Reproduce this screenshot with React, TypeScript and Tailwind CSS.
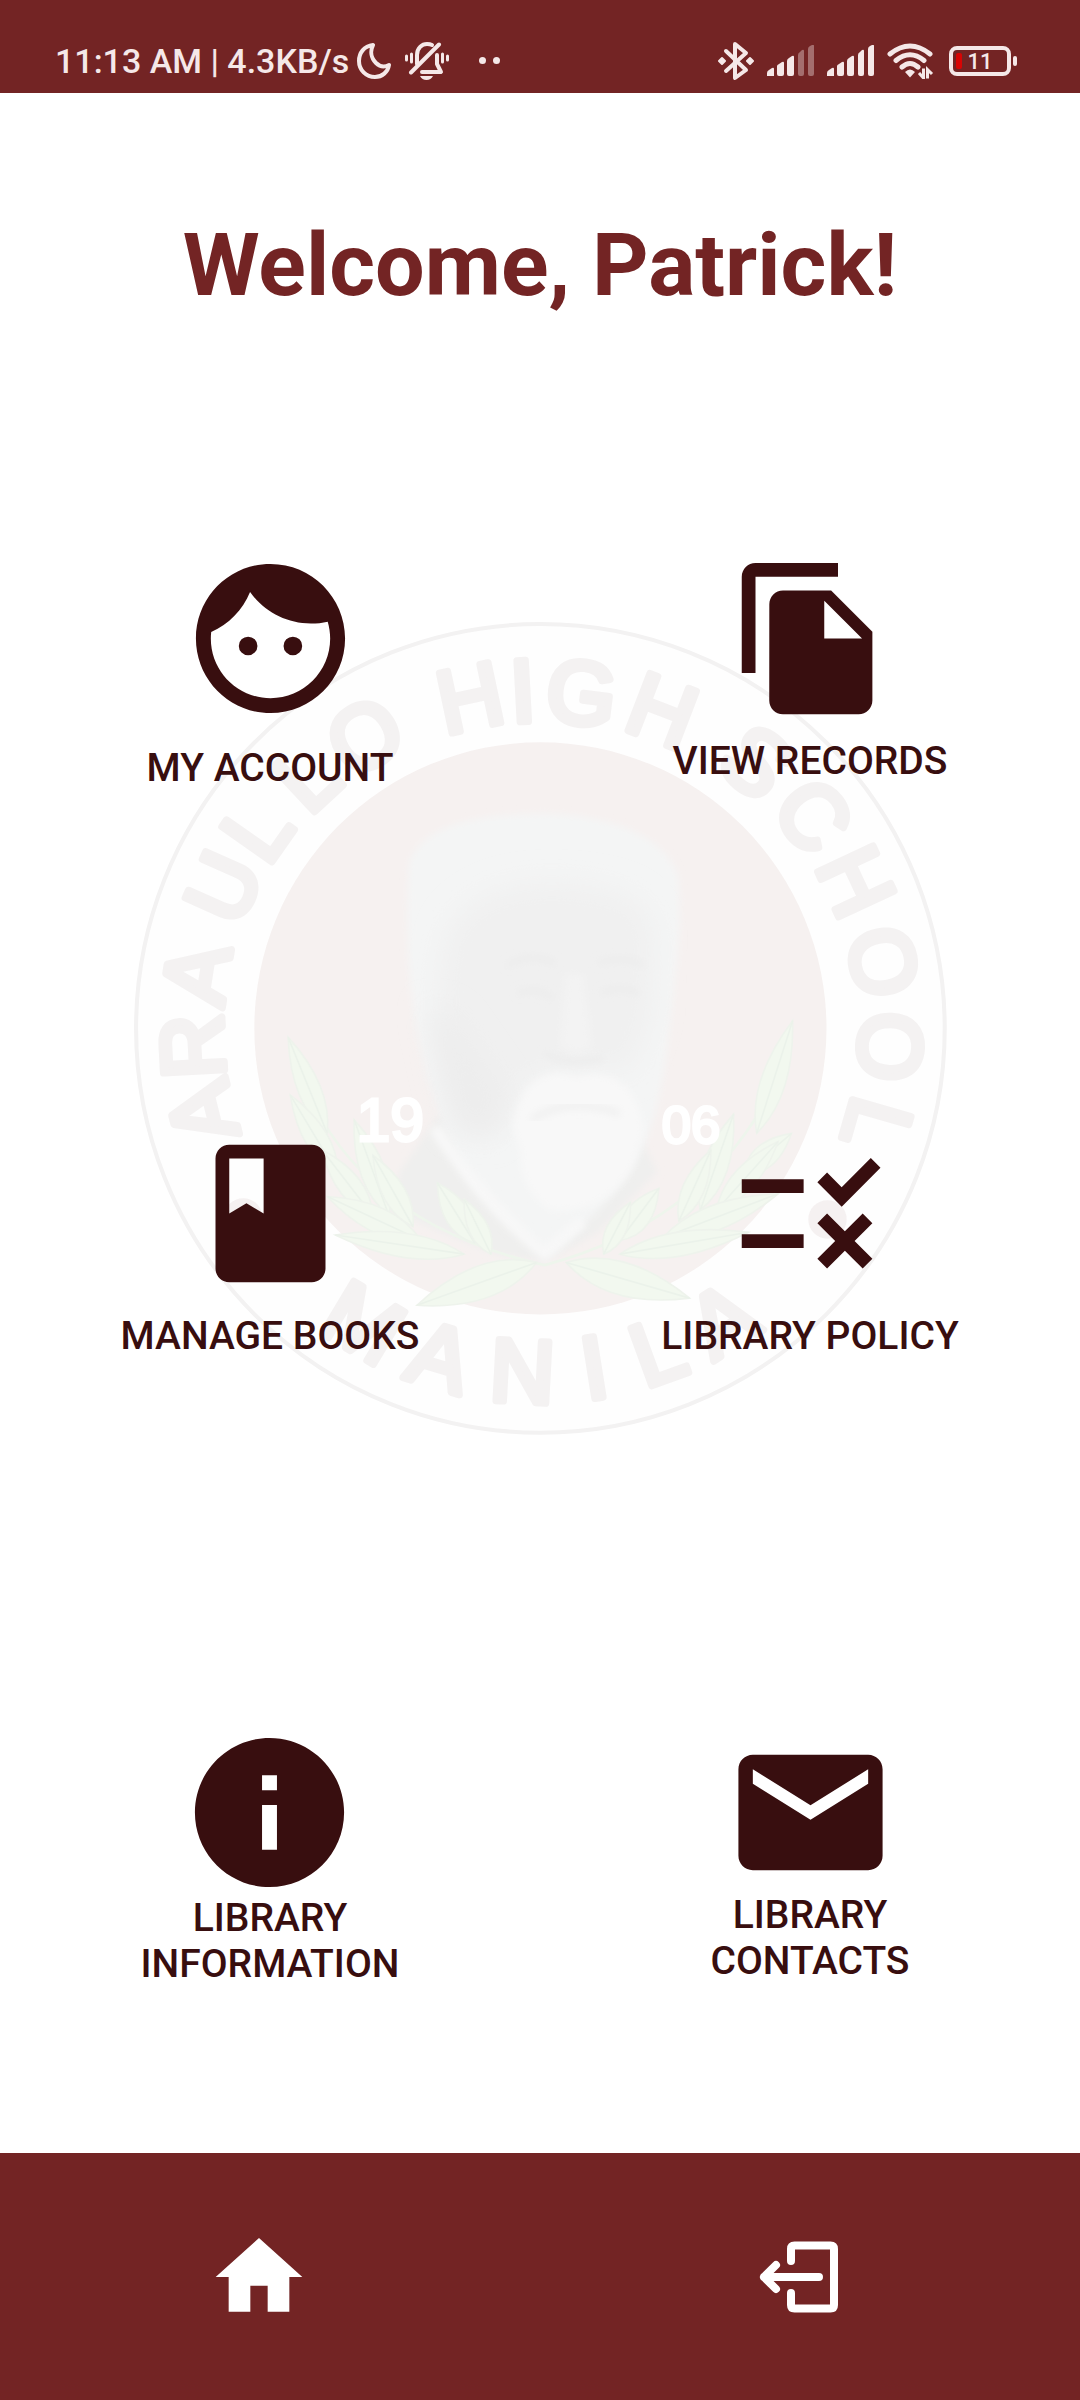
import type { ReactNode } from "react";

const GLYPHS: { ch: string; deg: number; y: number }[] = [
  { ch: "A", deg: -104, y: 92 },
  { ch: "R", deg: -93, y: 92 },
  { ch: "A", deg: -81, y: 92 },
  { ch: "U", deg: -66, y: 93 },
  { ch: "L", deg: -55, y: 94 },
  { ch: "L", deg: -43, y: 97 },
  { ch: "O", deg: -31, y: 99 },
  { ch: "H", deg: -12, y: 102 },
  { ch: "I", deg: -3, y: 102 },
  { ch: "G", deg: 7, y: 102 },
  { ch: "H", deg: 21, y: 100 },
  { ch: "S", deg: 39, y: 97 },
  { ch: "C", deg: 52, y: 94 },
  { ch: "H", deg: 65, y: 92 },
  { ch: "O", deg: 79, y: 91 },
  { ch: "O", deg: 93, y: 90 },
  { ch: "L", deg: 106, y: 90 },
];

const CITY: { ch: string; deg: number }[] = [
  { ch: "M", deg: 31 },
  { ch: "A", deg: 17 },
  { ch: "N", deg: 3 },
  { ch: "I", deg: -9 },
  { ch: "L", deg: -20 },
  { ch: "A", deg: -32 },
];

// Leaf as base point, tip point and half width.
const LEAVES: [number, number, number, number, number][] = [
  [385, 970, 312, 795, 42],
  [405, 1045, 316, 900, 42],
  [500, 1120, 435, 945, 46],
  [470, 1120, 375, 1000, 42],
  [545, 1140, 470, 1010, 42],
  [660, 1170, 590, 1060, 46],
  [690, 1190, 640, 1090, 36],
  [560, 1165, 385, 1085, 46],
  [640, 1190, 400, 1155, 44],
  [775, 1205, 552, 1283, 60],
  [1185, 970, 1252, 765, 46],
  [1160, 1045, 1250, 970, 42],
  [1080, 1110, 1142, 935, 46],
  [1110, 1110, 1225, 985, 42],
  [1040, 1130, 1100, 1000, 40],
  [930, 1165, 1003, 1070, 46],
  [900, 1190, 950, 1095, 36],
  [1010, 1160, 1225, 1080, 46],
  [930, 1190, 1170, 1150, 44],
  [830, 1205, 1060, 1270, 60],
];

function leafPath([x1, y1, x2, y2, w]: [number, number, number, number, number]) {
  const len = Math.hypot(x2 - x1, y2 - y1);
  const nx = (-(y2 - y1) / len) * w;
  const ny = ((x2 - x1) / len) * w;
  const mx = x1 + (x2 - x1) * 0.4;
  const my = y1 + (y2 - y1) * 0.4;
  return `M${x1} ${y1}Q${mx + nx} ${my + ny} ${x2} ${y2}Q${mx - nx} ${my - ny} ${x1} ${y1}Z`;
}

function Seal() {
  return (
    <svg viewBox="0 0 812 812" className="w-[76%]" aria-label="School seal" role="img">
      <defs>
        <filter id="soft" x="-10%" y="-10%" width="120%" height="120%">
          <feGaussianBlur stdDeviation="7" />
        </filter>
        <filter id="softer" x="-40%" y="-40%" width="180%" height="180%">
          <feGaussianBlur stdDeviation="26" />
        </filter>
        <clipPath id="disc">
          <circle cx="406" cy="406" r="283" />
        </clipPath>
      </defs>
      <circle cx="406" cy="406" r="400" fill="#fefefe" stroke="#f3f2f2" strokeWidth="4" />
      <circle cx="406" cy="406" r="283" fill="#f6f1f0" />
      <g fill="#f4f2f2" stroke="#f4f2f2" strokeWidth="7" strokeLinejoin="round" fontFamily="Liberation Sans, Arial, sans-serif" fontSize="88" textAnchor="middle">
        {GLYPHS.map((g, i) => (
          <text key={i} x="406" y={g.y} transform={`rotate(${g.deg} 406 406)`}>
            {g.ch}
          </text>
        ))}
        {CITY.map((g, i) => (
          <text key={i} x="406" y="776" transform={`rotate(${g.deg} 406 406)`}>
            {g.ch}
          </text>
        ))}
      </g>
      <circle cx="690" cy="595" r="19" fill="#f5f1f1" />
      <circle cx="112" cy="593" r="19" fill="#f5f1f1" />
      <g clipPath="url(#disc)">
        <g transform="matrix(.5310 0 0 .5435 -9.300 -17.400)">
          <path filter="url(#soft)" fill="#efefee" d="M590 940L520 1040L500 1110L700 1190L790 1205L890 1150L1000 1040L960 960Z" />
          <path filter="url(#soft)" fill="#f4f5f5" d="M537 480C560 405 680 388 790 388C890 390 1010 420 1038 500C1048 580 1034 680 1024 760C1015 850 1000 960 960 1020C920 1090 870 1130 800 1190C740 1150 690 1110 640 1040C600 960 560 850 545 740C532 640 534 560 537 480Z" />
          <path filter="url(#softer)" fill="#f0f0f0" d="M610 600C650 540 720 510 820 515C920 520 980 540 995 600L990 760L950 860L860 850L760 870L700 970L640 960C590 860 580 700 610 600Z" />
          <path filter="url(#softer)" fill="#ededed" d="M570 740L620 760L720 900L690 980L620 960Z" />
          <path filter="url(#soft)" fill="none" stroke="#ececec" strokeWidth="10" d="M720 665Q760 640 810 660M890 660Q940 645 975 665M740 715Q775 700 805 725M895 715Q930 700 965 715M790 825Q840 850 900 832" />
          <path filter="url(#soft)" fill="#f3f3f3" d="M830 680L862 680L878 810Q850 835 818 810Z" />
          <path filter="url(#soft)" fill="#f8f8f8" d="M730 960C740 880 790 845 850 868C910 850 965 880 975 965L955 1030Q900 1120 800 1110Q740 1070 745 1000Z" />
          <path filter="url(#soft)" fill="none" stroke="#f1f1f1" strokeWidth="14" d="M765 945Q840 900 930 935" />
          <path filter="url(#soft)" fill="none" stroke="#f8f8f8" strokeWidth="22" d="M585 960Q670 1090 790 1190L860 1130" />
        </g>
      </g>
      <g transform="matrix(.5310 0 0 .5435 -9.300 -17.400)">
        <path fill="none" stroke="#eef5ec" strokeWidth="5" d="M330 850Q430 1130 790 1210Q1130 1120 1245 820" />
        {LEAVES.map((l, i) => (
          <g key={i}>
            <path d={leafPath(l)} fill="#f2f8ef" stroke="#eef3ec" strokeWidth="3" />
            <path d={`M${l[0]} ${l[1]}L${l[2]} ${l[3]}`} stroke="#ebf2ea" strokeWidth="3" />
          </g>
        ))}
      </g>
      <g fill="#fff" stroke="#fff" strokeWidth="3" fontFamily="Liberation Sans, Arial, sans-serif">
        <text x="224" y="517" fontSize="60">19</text>
        <text x="526" y="519" fontSize="52">06</text>
      </g>
    </svg>
  );
}

function Tile({ label, path, size, tight }: { label: ReactNode; path: string; size: string; tight?: boolean }) {
  return (
    <button type="button" className="flex flex-col items-center justify-center justify-self-center text-[#380e0f]">
      <svg viewBox="0 0 24 24" fill="currentColor" className={size} aria-hidden="true">
        <path d={path} />
      </svg>
      <span className={tight ? "-mt-[7px] text-[39px] font-medium leading-[46px]" : "mt-[17px] text-[39px] font-medium leading-[46px]"}>{label}</span>
    </button>
  );
}

function Signal({ level }: { level: number }) {
  const bars = [
    "M0 31V28Q0 26 2 25L5 23Q7 22 7 24V31Z",
    "M10 31V21Q10 20 12 19L15 17Q17 16 17 18V29Q17 31 15 31H12Q10 31 10 29Z",
    "M20 31V16Q20 14 22 13L25 11Q27 10 27 12V29Q27 31 25 31H22Q20 31 20 29Z",
    "M31 31V10Q31 8 33 7L35 5Q37 4 37 6V29Q37 31 35 31H33Q31 31 31 29Z",
    "M41 31V4Q41 2 43 1L45 0Q47 -1 47 1V29Q47 31 45 31H43Q41 31 41 29Z",
  ];
  return (
    <svg viewBox="0 0 48 31" className="h-[31px] w-12" fill="#f5e8e8" aria-hidden="true">
      {bars.map((d, i) => (
        <path key={i} d={d} opacity={i < level ? 1 : 0.38} />
      ))}
    </svg>
  );
}

function StatusBar() {
  return (
    <header className="flex h-[93px] items-center justify-between bg-[#732424] pl-[55px] pr-[63px] pt-7 text-[#f5e8e8]">
      <div className="flex items-center">
        <span className="whitespace-nowrap text-[34px] font-medium leading-[40px]">11:13 AM | 4.3KB/s</span>
        <svg viewBox="0 0 34 36" className="ml-2 h-9 w-[34px]" fill="none" stroke="currentColor" strokeWidth="4" strokeLinejoin="round" aria-hidden="true">
          <path d="M16 2C7 3 2 10 2 18C2 27 9 34 18 34C25 34 31 29 32 22C28 24 23 24 19 20C14 15 13 8 16 2Z" />
        </svg>
        <svg viewBox="0 0 44 38" className="ml-3.5 h-[38px] w-11" fill="none" stroke="currentColor" strokeLinecap="round" strokeLinejoin="round" aria-hidden="true">
          <path strokeWidth="3" d="M1.500 14V18M42.500 14V18M6.500 12V20M37.500 12V20" />
          <path strokeWidth="4" d="M12 22V13C12 6 17 2 22 2C24 2 26 2.500 27 3" />
          <path strokeWidth="4" d="M6 30.500L34 2.500" />
          <path strokeWidth="4" d="M32 13V22L36 30H17" />
          <path fill="currentColor" stroke="none" d="M15 34H28Q26 38 21.500 38Q17 38 15 34Z" />
        </svg>
        <span className="ml-[30px] flex gap-[7px]">
          <i className="size-[7px] rounded-full bg-current" />
          <i className="size-[7px] rounded-full bg-current" />
        </span>
      </div>
      <div className="flex items-center">
        <svg viewBox="0 0 36 40" className="h-10 w-9" fill="none" stroke="currentColor" strokeWidth="4" strokeLinecap="round" strokeLinejoin="round" aria-hidden="true">
          <path d="M8 10L28 29L17 37V3L28 12L8 30" />
          <path fill="currentColor" strokeWidth="2" d="M1 20L4 17L7 20L4 23ZM29 20L32 17L35 20L32 23Z" />
        </svg>
        <span className="ml-[13px] flex gap-3">
          <Signal level={3} />
          <Signal level={5} />
        </span>
        <svg viewBox="0 0 47 36" className="ml-3 h-9 w-[47px]" fill="none" stroke="currentColor" strokeWidth="5" aria-hidden="true">
          <path strokeLinecap="round" d="M3 11Q23 -5 43 11M9 17.500Q23 6 37 17.500M15 24Q23 17 31 24" />
          <path fill="currentColor" stroke="none" d="M18 29Q23 24 28 29L23 34.500Z" />
          <path strokeWidth="3" d="M36.500 25.500V35L32 30M40.500 35.500V26.500L45 31" />
        </svg>
        <svg viewBox="0 0 68 30" className="ml-[15px] h-[30px] w-[68px]" aria-hidden="true">
          <rect x="2" y="2" width="58" height="26" rx="6" fill="none" stroke="currentColor" strokeWidth="4" />
          <rect x="64" y="10" width="4" height="10" rx="2" fill="currentColor" />
          <rect x="7" y="7" width="6" height="16" rx="2" fill="#d80404" />
          <text x="31" y="23" textAnchor="middle" fill="currentColor" fontFamily="Roboto, sans-serif" fontSize="22" fontWeight="500">
            11
          </text>
        </svg>
      </div>
    </header>
  );
}

export default function App() {
  return (
    <div className="flex min-h-screen flex-col bg-white font-['Roboto',sans-serif]">
      <StatusBar />
      <main className="grid flex-1">
        <div className="col-start-1 row-start-1 flex items-start justify-center pt-[525px]">
          <Seal />
        </div>
        <div className="col-start-1 row-start-1 pt-[120px]">
          <h1 className="text-center text-[88px] font-bold leading-[104px] text-[#732424]">Welcome, Patrick!</h1>
          <div className="mt-[232px] grid grid-cols-2">
            <Tile
              label="MY ACCOUNT"
              size="size-[179px]"
              path="M9 11.750A1.250 1.250 0 1 0 9 14.250A1.250 1.250 0 1 0 9 11.750ZM15 11.750A1.250 1.250 0 1 0 15 14.250A1.250 1.250 0 1 0 15 11.750ZM12 2C6.480 2 2 6.480 2 12s4.480 10 10 10 10-4.480 10-10S17.520 2 12 2zm0 18c-4.410 0-8-3.590-8-8 0-.29.020-.58.050-.86 2.360-1.050 4.230-2.980 5.210-5.370C11.070 8.330 14.050 10 17.420 10c.78 0 1.530-.09 2.250-.26.21.71.33 1.470.33 2.260 0 4.410-3.590 8-8 8z"
            />
            <Tile
              label="VIEW RECORDS"
              size="size-[165px]"
              path="M16 1H4c-1.100 0-2 .9-2 2v14h2V3h12V1zm-1 4 6 6v10c0 1.100-.9 2-2 2H7.990C6.890 23 6 22.100 6 21l.01-14c0-1.100.89-2 1.990-2h7zm-1 7h5.500L14 6.500V12z"
            />
          </div>
          <div className="mt-[340px] grid grid-cols-2">
            <Tile
              label="MANAGE BOOKS"
              size="size-[165px]"
              path="M18 2H6c-1.100 0-2 .9-2 2v16c0 1.100.9 2 2 2h12c1.100 0 2-.9 2-2V4c0-1.100-.9-2-2-2zM6 4h5v8l-2.500-1.500L6 12V4z"
            />
            <Tile
              label="LIBRARY POLICY"
              size="size-[165px]"
              path="M16.540 11L13 7.460l1.410-1.410 2.120 2.120 4.240-4.240 1.410 1.410L16.540 11zM11 7H2v2h9V7zm10 6.410L19.590 12 17 14.590 14.410 12 13 13.410 15.590 16 13 18.590 14.410 20 17 17.410 19.590 20 21 18.590 18.410 16 21 13.410zM11 15H2v2h9v-2z"
            />
          </div>
          <div className="mt-[364px] grid grid-cols-2">
            <Tile
              tight
              label={<>LIBRARY<br />INFORMATION</>}
              size="size-[179px]"
              path="M12 2C6.480 2 2 6.480 2 12s4.480 10 10 10 10-4.480 10-10S17.520 2 12 2zm1 15h-2v-6h2v6zm0-8h-2V7h2v2z"
            />
            <Tile
              tight
              label={<>LIBRARY<br />CONTACTS</>}
              size="size-[173px]"
              path="M20 4H4c-1.100 0-2 .9-2 2v12c0 1.100.9 2 2 2h16c1.100 0 2-.9 2-2V6c0-1.100-.9-2-2-2zm0 4l-8 5-8-5V6l8 5 8-5v2z"
            />
          </div>
        </div>
      </main>
      <nav className="grid h-[247px] grid-cols-2 bg-[#732424] text-white">
        <button type="button" aria-label="Home" className="flex items-center justify-center pr-[22px]">
          <svg viewBox="0 0 24 24" className="size-[104px]" fill="currentColor" aria-hidden="true">
            <path d="M10 20v-6h4v6h5v-8h3L12 3 2 12h3v8z" />
          </svg>
        </button>
        <button type="button" aria-label="Log out" className="flex items-center justify-center pr-[22px]">
          <svg viewBox="0 0 80 72" className="h-[72px] w-20" fill="none" stroke="currentColor" strokeWidth="8" strokeLinecap="round" strokeLinejoin="round" aria-hidden="true">
            <path d="M32 20V8Q32 4.500 35.500 4.500H71.500Q75 4.500 75 8V64Q75 67.500 71.500 67.500H35.500Q32 67.500 32 64V52M60 36H5M17 24L5 36L17 48" />
          </svg>
        </button>
      </nav>
    </div>
  );
}
